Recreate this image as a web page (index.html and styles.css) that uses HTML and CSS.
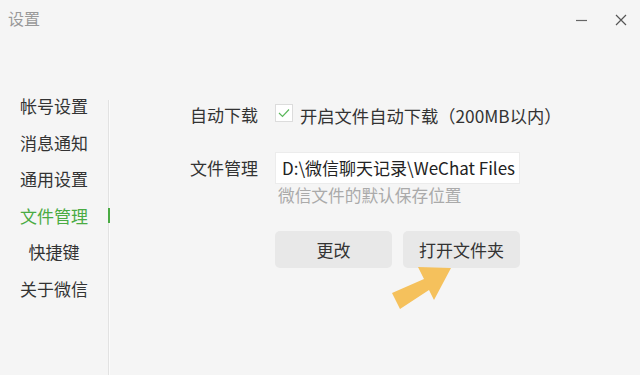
FILE: index.html
```html
<!DOCTYPE html>
<html lang="zh">
<head>
<meta charset="utf-8">
<title>设置</title>
<link rel="stylesheet" href="styles.css">
</head>
<body>
<div class="window">
  <div class="titlebar">
    <span class="title">设置</span>
    <div class="controls">
      <svg class="ctl" width="14" height="14" viewBox="0 0 14 14"><line x1="1" y1="7.5" x2="12" y2="7.5" stroke="#666" stroke-width="1.2"/></svg>
      <svg class="ctl" width="14" height="14" viewBox="0 0 14 14"><path d="M2 2 L12 12 M12 2 L2 12" stroke="#555" stroke-width="1.2" fill="none"/></svg>
    </div>
  </div>
  <div class="main">
    <nav class="nav">
      <div class="nav-item">帐号设置</div>
      <div class="nav-item">消息通知</div>
      <div class="nav-item">通用设置</div>
      <div class="nav-item active">文件管理</div>
      <div class="nav-item">快捷键</div>
      <div class="nav-item">关于微信</div>
    </nav>
    <div class="divider"></div>
    <section class="content">
      <div class="form">
        <div class="label">自动下载</div>
        <div class="field check-field">
          <span class="checkbox"><svg width="12" height="10" viewBox="0 0 12 10"><path d="M1 5 L4.5 8.5 L11 1.5" stroke="#5cb85c" stroke-width="1.2" fill="none"/></svg></span>
          <span class="check-label">开启文件自动下载（200MB以内）</span>
        </div>
        <div class="label">文件管理</div>
        <div class="field">
          <div class="path-input">D:\微信聊天记录\WeChat Files</div>
          <div class="hint">微信文件的默认保存位置</div>
          <div class="buttons">
            <button class="btn">更改</button>
            <button class="btn">打开文件夹</button>
          </div>
        </div>
      </div>
      <svg class="arrow" width="70" height="55" viewBox="0 0 70 55"><polygon points="2,29 34,15 28,3 61,4 44,36 39,26 10,45" fill="#f5c15c"/></svg>
    </section>
  </div>
</div>
</body>
</html>
```

FILE: styles.css
```css
* { box-sizing: border-box; }
html, body { margin: 0; padding: 0; }
body {
  width: 640px;
  height: 375px;
  overflow: hidden;
  background: #f5f5f5;
  font-family: "Noto Sans CJK SC", "Noto Sans", sans-serif;
  color: #333;
}
.window {
  display: flex;
  flex-direction: column;
  height: 375px;
}
.titlebar {
  height: 40px;
  display: flex;
  justify-content: space-between;
  align-items: flex-start;
  padding: 7px 12px 0 8px;
}
.title {
  font-size: 16px;
  color: #999;
  line-height: 22px;
}
.controls {
  display: flex;
  gap: 25px;
  padding-top: 6px;
}
.ctl { display: block; }
.main {
  flex: 1;
  display: flex;
}
.nav {
  width: 108px;
  padding-top: 48px;
}
.nav-item {
  position: relative;
  text-align: center;
  font-size: 17px;
  line-height: 36.6px;
  height: 36.6px;
  color: #333;
}
.nav-item.active { color: #4aab43; }
.nav-item.active::after {
  content: "";
  position: absolute;
  right: -2px;
  top: 10px;
  width: 2px;
  height: 15px;
  background: #4aab43;
}
.divider {
  width: 2px;
  margin-top: 60px;
  border-left: 1px solid #e2e2e2;
  background: #fbfbfb;
}
.content {
  flex: 1;
  position: relative;
  padding: 59px 0 0 80px;
}
.form {
  display: grid;
  grid-template-columns: 85px auto;
  row-gap: 21px;
  align-items: start;
}
.label {
  font-size: 17px;
  line-height: 32px;
  color: #333;
}
.check-field {
  display: flex;
  align-items: center;
  height: 32px;
}
.checkbox {
  width: 18px;
  height: 18px;
  border: 1px solid #dcdcdc;
  background: #fff;
  display: flex;
  align-items: center;
  justify-content: center;
  margin-right: 7px;
  margin-top: -4px;
}
.check-label {
  font-size: 17.3px;
  color: #333;
}
.path-input {
  width: 245px;
  height: 32px;
  background: #fff;
  border: 1px solid #ececec;
  font-size: 17px;
  line-height: 30px;
  padding-left: 6px;
  white-space: nowrap;
  overflow: hidden;
  color: #222;
}
.hint {
  font-size: 16.7px;
  color: #aaa;
  line-height: 22px;
  margin-top: 0;
  padding-left: 3px;
}
.buttons {
  display: flex;
  gap: 11px;
  margin-top: 25px;
}
.btn {
  width: 117px;
  height: 37px;
  border: none;
  border-radius: 5px;
  background: #e8e8e8;
  font-family: inherit;
  font-size: 17px;
  color: #333;
  padding: 0;
}
.arrow {
  position: absolute;
  left: 280px;
  top: 224px;
}
```
